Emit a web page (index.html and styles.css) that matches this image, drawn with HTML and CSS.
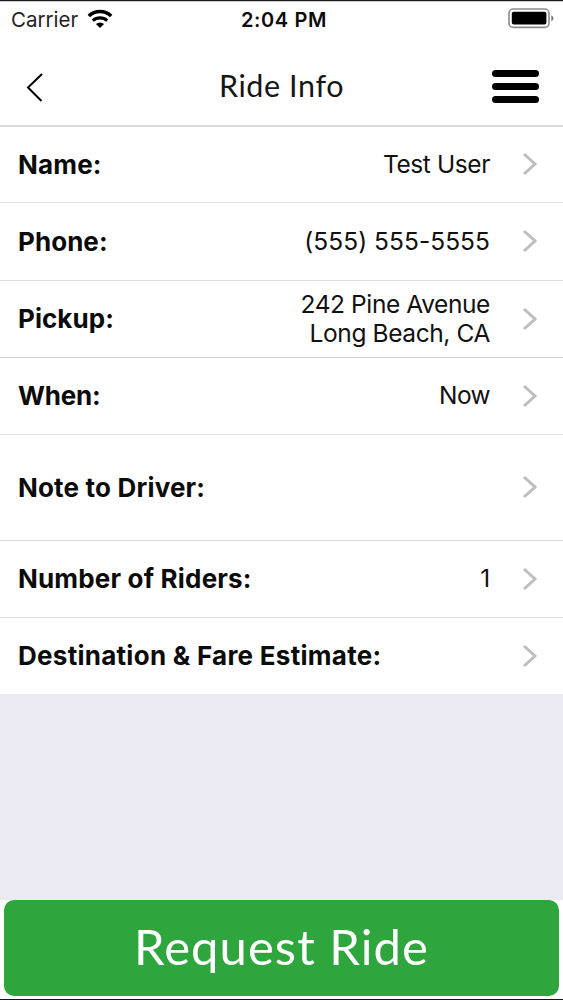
FILE: index.html
```html
<!DOCTYPE html>
<html lang="en">
<head>
<meta charset="utf-8">
<title>Ride Info</title>
<link rel="stylesheet" href="styles.css">
</head>
<body>
<div class="screen">
  <div class="status">
    <div class="status-left">
      <span class="carrier">Carrier</span>
      <svg class="wifi" width="26" height="20" viewBox="0 0 26 20">
        <path d="M1.8 7A16.2 16.2 0 0 1 24.2 7" fill="none" stroke="#000" stroke-width="3.6"/>
        <path d="M5.8 11.6A10.6 10.6 0 0 1 20.2 11.6" fill="none" stroke="#000" stroke-width="3.2"/>
        <path d="M13 19L8.9 15.1A6 6 0 0 1 17.1 15.1Z"/>
      </svg>
    </div>
    <span class="clock">2:04 PM</span>
    <svg class="battery" width="47" height="21" viewBox="0 0 47 21">
      <rect x="1" y="1" width="40" height="18.4" rx="4.2" fill="#fff" stroke="#8c8c8c" stroke-width="1.6"/>
      <rect x="3.8" y="3.8" width="34.6" height="12.8" rx="2" fill="#000"/>
      <path d="M43.3 7.3Q45.4 8.2 45.4 10.3T43.3 13.3Z" fill="#777"/>
    </svg>
  </div>
  <header class="nav">
    <svg class="back" width="20" height="32" viewBox="0 0 20 32"><path d="M18 3L4 16.5L17.5 30" fill="none" stroke="#000" stroke-width="2"/></svg>
    <h1 class="title">Ride Info</h1>
    <div class="menu"><i class="bar"></i><i class="bar"></i><i class="bar"></i></div>
  </header>
  <main class="list">
    <div class="row first"><span class="label">Name:</span><span class="value user">Test User</span><svg class="chev" viewBox="0 0 16 24"><path d="M2 2L13 12L2 22"/></svg></div>
    <div class="row second"><span class="label phone">Phone:</span><span class="value number">(555) 555-5555</span><svg class="chev" viewBox="0 0 16 24"><path d="M2 2L13 12L2 22"/></svg></div>
    <div class="row strong"><span class="label phone">Pickup:</span><span class="value address">242 Pine Avenue<br>Long Beach, CA</span><svg class="chev" viewBox="0 0 16 24"><path d="M2 2L13 12L2 22"/></svg></div>
    <div class="row"><span class="label when">When:</span><span class="value now">Now</span><svg class="chev" viewBox="0 0 16 24"><path d="M2 2L13 12L2 22"/></svg></div>
    <div class="row tall"><span class="label">Note to Driver:</span><span class="value"></span><svg class="chev" viewBox="0 0 16 24"><path d="M2 2L13 12L2 22"/></svg></div>
    <div class="row"><span class="label">Number of Riders:</span><span class="value">1</span><svg class="chev" viewBox="0 0 16 24"><path d="M2 2L13 12L2 22"/></svg></div>
    <div class="row last"><span class="label dest">Destination &amp; Fare Estimate:</span><span class="value"></span><svg class="chev" viewBox="0 0 16 24"><path d="M2 2L13 12L2 22"/></svg></div>
  </main>
  <footer class="footer"><button class="request">Request Ride</button></footer>
</div>
</body>
</html>
```
FILE: styles.css
```css
* { box-sizing: border-box; }
body { margin: 0; background: #fff; color: #0b0b0b; font-family: Inter, "Liberation Sans", sans-serif; }
.screen { width: 563px; height: 1000px; display: flex; flex-direction: column; background: #ebe9f1; border-top: 1px solid #1b191b; border-bottom: 1px solid #151515; overflow: hidden; }
.status { height: 37px; flex: none; display: grid; grid-template-columns: 1fr auto 1fr; align-items: center; padding: 0 8px 0 11px; background: #fff; border-top: 1px solid #c9c9c9; }
.status-left { display: flex; align-items: center; gap: 9px; }
.carrier { font-size: 20.5px; line-height: 24px; color: #222; }
.wifi { width: 26px; height: 20px; margin-top: -3px; }
.clock { font-size: 20px; font-weight: 600; letter-spacing: .6px; margin-left: 2px; }
.battery { justify-self: end; margin-top: -3px; }
.nav { height: 89px; flex: none; display: grid; grid-template-columns: 1fr auto 1fr; align-items: center; padding: 10px 24px 0; background: #fff; border-bottom: 2px solid #d9d9d9; }
.title { margin: -3px 0 0; font: 400 30.5px/36px Lato, sans-serif; letter-spacing: .6px; color: #161616; }
.menu { justify-self: end; width: 47px; display: flex; flex-direction: column; gap: 6px; }
.bar { height: 7px; border-radius: 4px; background: #000; }
.list { flex: none; background: #fff; }
.row { height: 77px; display: flex; align-items: center; padding: 0 25px 0 18px; border-bottom: 1px solid #dfdfe0; }
.first { height: 76px; }
.second { height: 78px; }
.strong { border-bottom-color: #cfcfcf; }
.tall { height: 106px; }
.last { border-bottom-color: #ebe9f1; }
.label { font-size: 26px; line-height: 30px; font-weight: 700; white-space: nowrap; letter-spacing: .18px; }
.phone { letter-spacing: .05px; }
.when { letter-spacing: -.2px; }
.dest { letter-spacing: .27px; }
.value { flex: 1; text-align: right; font-size: 24.5px; line-height: 29.5px; color: #111; white-space: nowrap; letter-spacing: -.3px; }
.user { letter-spacing: -.4px; }
.number { letter-spacing: .05px; }
.address { letter-spacing: -.4px; }
.now { letter-spacing: -.6px; }
.chev { width: 16px; height: 24px; margin: -1px 0 0 32px; flex: none; fill: none; stroke: #bebec0; stroke-width: 3; }
.footer { height: 99px; flex: none; margin-top: auto; padding: 0 4px 3px; background: #fff; }
.request { display: block; width: 100%; height: 96px; border: 0; border-radius: 10px; background: #2fa63d; color: #fff; font: 400 49px/58px Lato, sans-serif; letter-spacing: 1.05px; padding: 0 0 4px; }
```
